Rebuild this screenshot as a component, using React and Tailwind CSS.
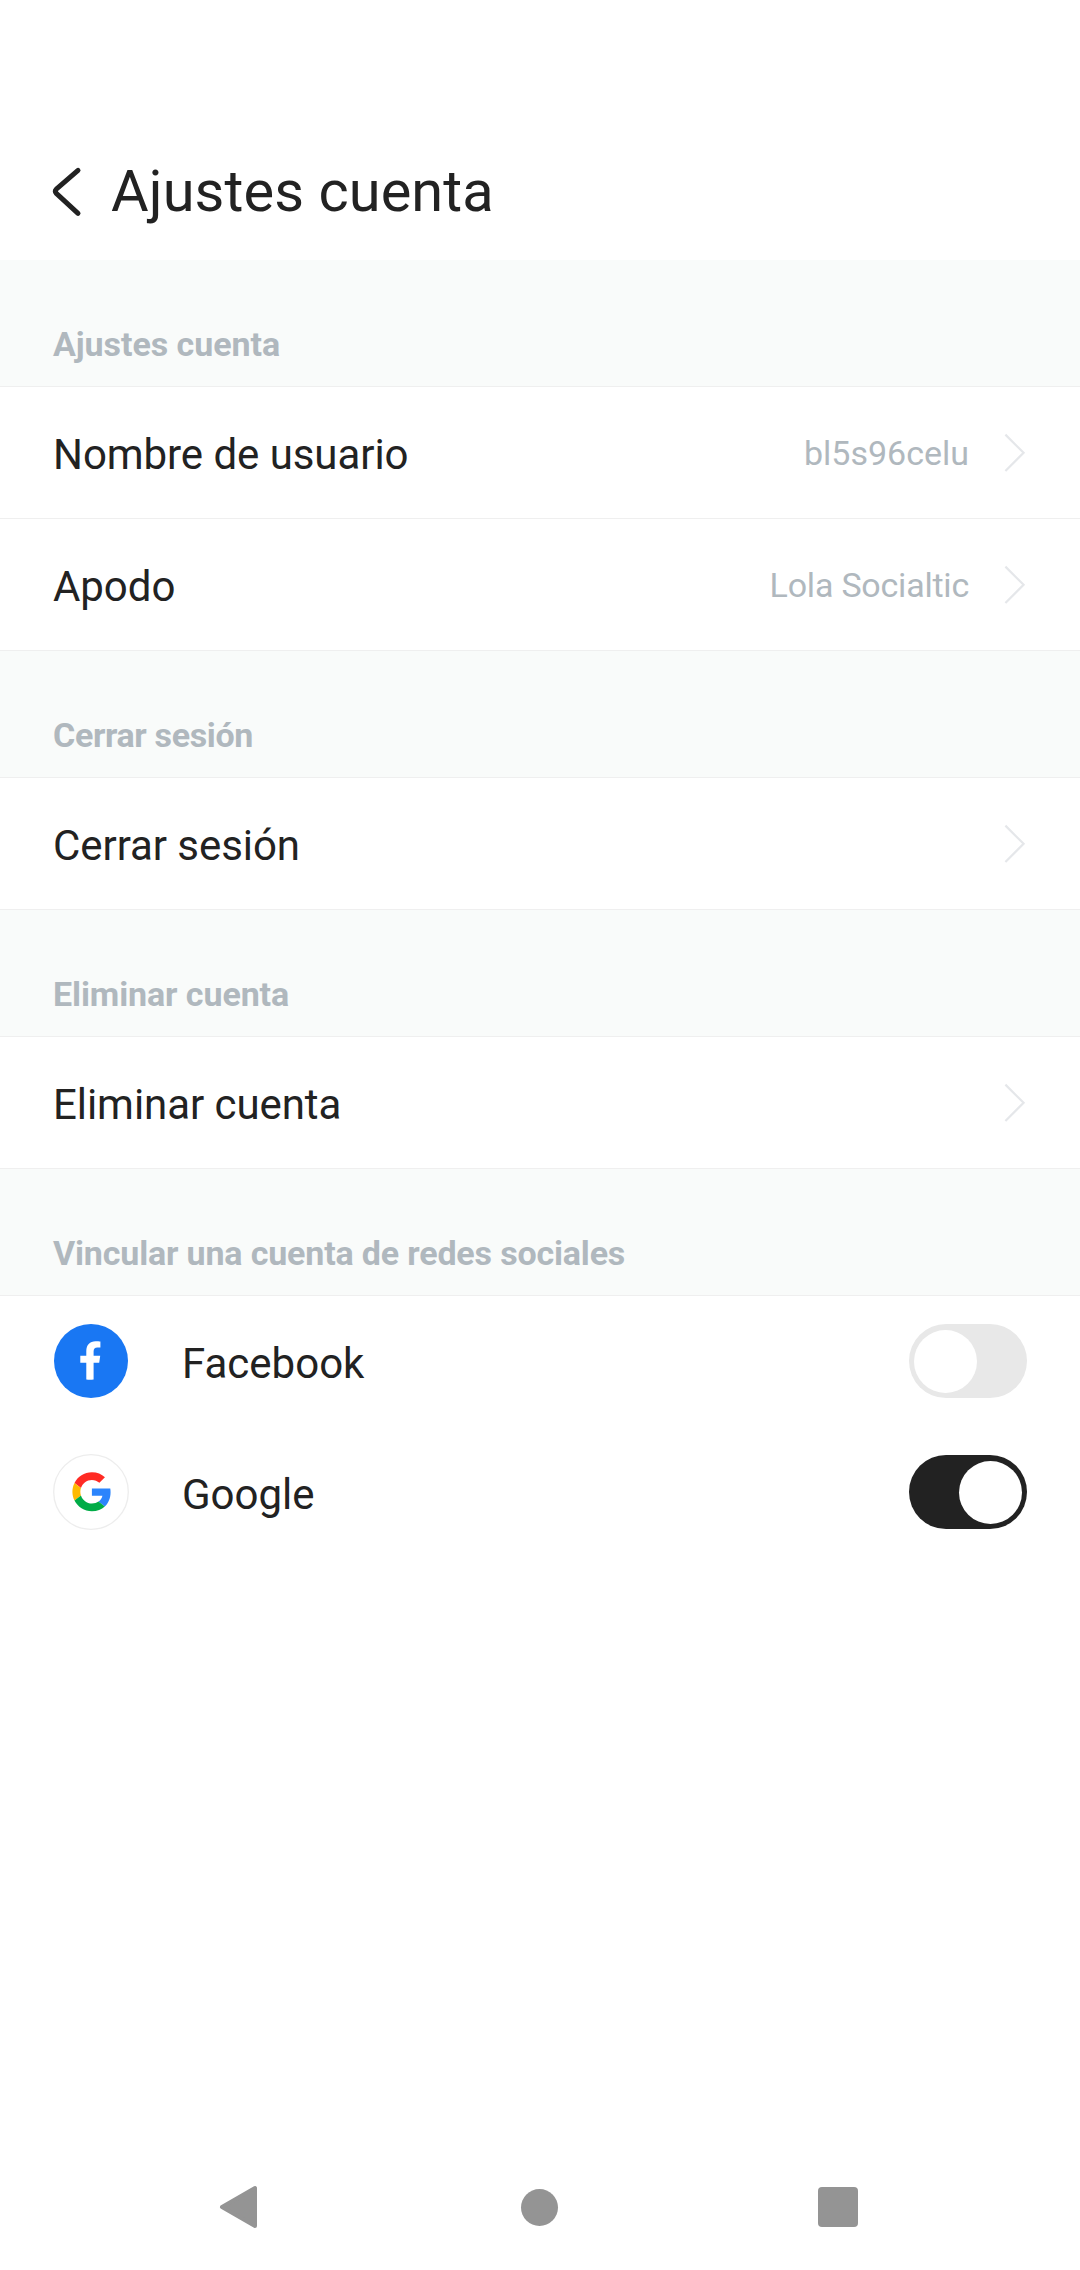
const Chevron = () => (
  <svg width="24" height="42" viewBox="0 0 24 42" fill="none" className="shrink-0">
    <path d="M2.4 2.6 L20.6 20.8 L2.4 39" stroke="#e5e7ea" strokeWidth="2.2" />
  </svg>
);

const SectionTitle = ({ children, tracking }) => (
  <h2
    className={
      tracking +
      " flex h-[127px] items-end border-b border-[#efefef] bg-[#f9fbfa] px-[53px] pb-[22px] text-[34px] leading-[40px] font-bold text-[#b0b8be]"
    }
  >
    {children}
  </h2>
);

const Row = ({ label, value, tracking = "" }) => (
  <div className="flex h-[132px] items-center border-b border-[#efefef] px-[53px]">
    <span className="flex-1 pt-[5px] text-[42px] leading-[50px] tracking-[-0.06px]">{label}</span>
    {value && (
      <span className={tracking + " pt-[1px] pr-[34px] text-[34px] leading-[40px] text-[#b0b8be]"}>{value}</span>
    )}
    <Chevron />
  </div>
);

const Toggle = ({ on }) => (
  <div
    className={
      (on ? "justify-end bg-[#222222]" : "justify-start bg-[#e8e8e8]") +
      " flex h-[74px] w-[118px] items-center rounded-full px-[5px]"
    }
  >
    <div className="size-[63px] rounded-full bg-white" />
  </div>
);

const SocialRow = ({ icon, label, on }) => (
  <div className="flex h-[130px] items-center px-[53px]">
    <div className="flex size-[76px] items-center justify-center">{icon}</div>
    <span className="ml-[53px] flex-1 pt-[6px] text-[42px] leading-[50px]">{label}</span>
    <Toggle on={on} />
  </div>
);

const FacebookIcon = () => (
  <svg width="76" height="76" viewBox="0 0 76 76">
    <circle cx="38" cy="38" r="37" fill="#1977f3" />
    <path
      d="M33.3 56.4V39.8H27.3V32.8H33.3V28.2C33.3 22 36.8 18.2 42.6 18.2C44.6 18.2 46.3 18.2 47.4 18.5V24.4H44.4C41.8 24.4 40.6 26 40.6 28.4V32.8H47.2L46.2 39.8H40.6V56.4C38 56.8 35.8 56.8 33.3 56.4Z"
      fill="#fff"
    />
  </svg>
);

const GoogleIcon = () => (
  <svg width="76" height="76" viewBox="0 0 76 76">
    <circle cx="38" cy="38" r="37.3" fill="#fff" stroke="#ededed" strokeWidth="1.3" />
    <g transform="translate(19.4 18.2) scale(0.8125)">
      <path fill="#ff2b24" d="M24 9.5c3.54 0 6.71 1.22 9.21 3.6l6.85-6.85C35.9 2.38 30.47 0 24 0 14.62 0 6.51 5.38 2.56 13.22l7.98 6.19C12.43 13.72 17.74 9.5 24 9.5z" />
      <path fill="#2b84fc" d="M46.98 24.55c0-1.57-.15-3.09-.38-4.55H24v9.02h12.94c-.58 2.96-2.26 5.48-4.78 7.18l7.73 6c4.51-4.18 7.09-10.36 7.09-17.65z" />
      <path fill="#ffba00" d="M10.53 28.59c-.48-1.45-.76-2.99-.76-4.59s.27-3.14.76-4.59l-7.98-6.19C.92 16.46 0 20.12 0 24c0 3.88.92 7.54 2.56 10.78l7.97-6.19z" />
      <path fill="#00ac47" d="M24 48c6.48 0 11.93-2.13 15.89-5.81l-7.73-6c-2.15 1.45-4.92 2.3-8.16 2.3-6.26 0-11.57-4.22-13.47-9.91l-7.98 6.19C6.51 42.62 14.62 48 24 48z" />
    </g>
  </svg>
);

export default function App() {
  return (
    <div className="flex h-[2270px] w-[1080px] flex-col bg-white font-[Roboto,sans-serif] text-[#222222]">
      <header className="flex h-[260px] items-center pt-[123px] pl-[51px]">
        <svg width="32" height="52" viewBox="0 0 32 52" fill="none" className="shrink-0">
          <path
            d="M27 4.3 L5.3 23.2 Q3.2 25.3 5.3 27.4 L27 47.3"
            stroke="#222222"
            strokeWidth="5"
            strokeLinecap="round"
            strokeLinejoin="round"
          />
        </svg>
        <h1 className="-mt-px ml-[28px] text-[57.75px] leading-[68px] tracking-[0.08px]">Ajustes cuenta</h1>
      </header>

      <SectionTitle tracking="tracking-[-0.05px]">Ajustes cuenta</SectionTitle>
      <Row label="Nombre de usuario" value="bl5s96celu" />
      <Row label="Apodo" value="Lola Socialtic" tracking="tracking-[-0.22px]" />
      <SectionTitle tracking="tracking-[-0.36px]">Cerrar sesión</SectionTitle>
      <Row label="Cerrar sesión" />
      <SectionTitle tracking="tracking-[-0.1px]">Eliminar cuenta</SectionTitle>
      <Row label="Eliminar cuenta" />
      <SectionTitle tracking="tracking-[-0.17px]">Vincular una cuenta de redes sociales</SectionTitle>
      <div className="flex flex-col gap-px">
        <SocialRow icon={<FacebookIcon />} label="Facebook" on={false} />
        <SocialRow icon={<GoogleIcon />} label="Google" on />
      </div>

      <nav className="mt-auto flex h-[126px] items-center pl-[219px]">
        <svg width="39" height="44" viewBox="0 0 39 44">
          <path d="M3 22 L36 3 V41 Z" fill="#949494" stroke="#949494" strokeWidth="4" strokeLinejoin="round" />
        </svg>
        <div className="ml-[263px] size-[37px] rounded-full bg-[#949494]" />
        <div className="ml-[260px] size-[40px] rounded-[4px] bg-[#949494]" />
      </nav>
    </div>
  );
}
